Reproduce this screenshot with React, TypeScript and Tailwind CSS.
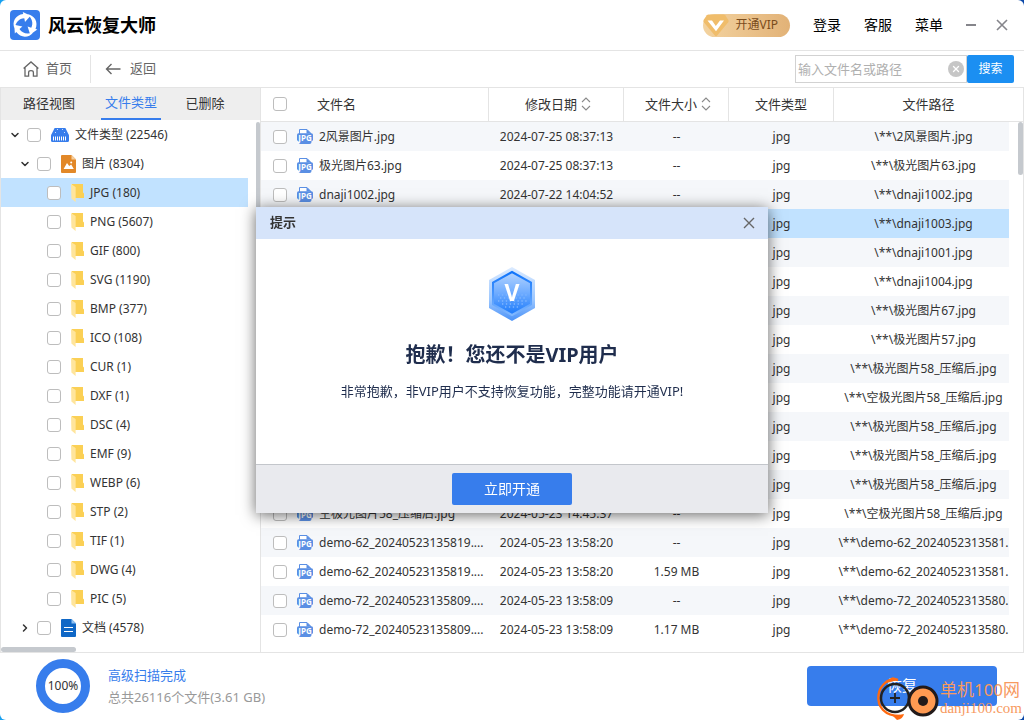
import { ChevronDown, ChevronRight, X } from "lucide-react";
import { useState } from "react";

interface FileRow {
  name: string;
  path: string;
  date: string;
  size: string;
}

interface Folder {
  label: string;
  count: number;
}

const folders: Folder[] = [
  { label: "JPG", count: 180 },
  { label: "PNG", count: 5607 },
  { label: "GIF", count: 800 },
  { label: "SVG", count: 1190 },
  { label: "BMP", count: 377 },
  { label: "ICO", count: 108 },
  { label: "CUR", count: 1 },
  { label: "DXF", count: 1 },
  { label: "DSC", count: 4 },
  { label: "EMF", count: 9 },
  { label: "WEBP", count: 6 },
  { label: "STP", count: 2 },
  { label: "TIF", count: 1 },
  { label: "DWG", count: 4 },
  { label: "PIC", count: 5 },
];

const files: FileRow[] = [
  { name: "2风景图片.jpg", path: "\\**\\2风景图片.jpg", date: "2024-07-25 08:37:13", size: "--" },
  { name: "极光图片63.jpg", path: "\\**\\极光图片63.jpg", date: "2024-07-25 08:37:13", size: "--" },
  { name: "dnaji1002.jpg", path: "\\**\\dnaji1002.jpg", date: "2024-07-22 14:04:52", size: "--" },
  { name: "dnaji1003.jpg", path: "\\**\\dnaji1003.jpg", date: "2024-07-22 14:04:52", size: "--" },
  { name: "dnaji1001.jpg", path: "\\**\\dnaji1001.jpg", date: "2024-07-22 14:04:52", size: "--" },
  { name: "dnaji1004.jpg", path: "\\**\\dnaji1004.jpg", date: "2024-07-22 14:04:52", size: "--" },
  { name: "极光图片67.jpg", path: "\\**\\极光图片67.jpg", date: "2024-05-23 14:45:37", size: "--" },
  { name: "极光图片57.jpg", path: "\\**\\极光图片57.jpg", date: "2024-05-23 14:45:37", size: "--" },
  { name: "极光图片58_压缩后.jpg", path: "\\**\\极光图片58_压缩后.jpg", date: "2024-05-23 14:45:37", size: "--" },
  { name: "空极光图片58_压缩后.jpg", path: "\\**\\空极光图片58_压缩后.jpg", date: "2024-05-23 14:45:37", size: "--" },
  { name: "极光图片58_压缩后.jpg", path: "\\**\\极光图片58_压缩后.jpg", date: "2024-05-23 14:45:37", size: "--" },
  { name: "极光图片58_压缩后.jpg", path: "\\**\\极光图片58_压缩后.jpg", date: "2024-05-23 14:45:37", size: "--" },
  { name: "极光图片58_压缩后.jpg", path: "\\**\\极光图片58_压缩后.jpg", date: "2024-05-23 14:45:37", size: "--" },
  { name: "空极光图片58_压缩后.jpg", path: "\\**\\空极光图片58_压缩后.jpg", date: "2024-05-23 14:45:37", size: "--" },
  { name: "demo-62_20240523135819....", path: "\\**\\demo-62_2024052313581.", date: "2024-05-23 13:58:20", size: "--" },
  { name: "demo-62_20240523135819....", path: "\\**\\demo-62_2024052313581.", date: "2024-05-23 13:58:20", size: "1.59 MB" },
  { name: "demo-72_20240523135809....", path: "\\**\\demo-72_2024052313580.", date: "2024-05-23 13:58:09", size: "--" },
  { name: "demo-72_20240523135809....", path: "\\**\\demo-72_2024052313580.", date: "2024-05-23 13:58:09", size: "1.17 MB" },
];

function CheckBox({ label }: { label: string }) {
  return (
    <input
      type="checkbox"
      aria-label={label}
      className="block size-3.5 shrink-0 appearance-none rounded-[3px] border border-[#bdbdbd] bg-white checked:bg-[#377dec]"
    />
  );
}

function AppLogo() {
  return (
    <svg viewBox="0 0 30 30" className="size-[30px]">
      <rect width="30" height="30" rx="4" fill="#377dec" />
      {/* three arrows chasing each other */}
      {["rotate(0 15 15)", "rotate(120 15 15)", "rotate(240 15 15)"].map((turn) => (
        <path
          key={turn}
          transform={turn}
          fill="#fff"
          d="M4.6 18.6C1.6 11.6 5.6 4.8 13.2 3.9L12.8 2L20.6 5.8L15 12L14.3 8.2C9 8.4 5.4 12.4 4.6 18.6Z"
        />
      ))}
    </svg>
  );
}

function HomeIcon() {
  return (
    <svg viewBox="0 0 16 16" className="size-4" fill="none" stroke="#666" strokeWidth="1.3">
      <path d="M.6 7.6L8 .9L15.4 7.6M2 6.8V15.2H5.6V11.4Q5.6 9.6 8 9.6T10.4 11.4V15.2H14V6.8" />
    </svg>
  );
}

function BackIcon() {
  return (
    <svg viewBox="0 0 16 14" className="h-3.5 w-4" fill="none" stroke="#666" strokeWidth="1.4">
      <path d="M15.5 7H1.5M6.5 2L1.5 7L6.5 12" />
    </svg>
  );
}

function DriveIcon() {
  return (
    <svg viewBox="0 0 18 14" className="h-3.5 w-[18px] shrink-0">
      <path d="M3.6 0H14.4L17.4 6V8H.6V6Z" fill="#377dec" />
      <rect y="6" width="18" height="8" rx="1.5" fill="#377dec" />
      <path
        d="M2.5 8.5V12.5M4.5 8.5V12.5M6.5 8.5V12.5M8.5 8.5V12.5M10.5 8.5V12.5M12.5 8.5V12.5M14.5 8.5V12.5"
        stroke="#fff"
      />
      <path d="M6 1.5H7M11 1.5H12M4 4.5H5M13 4.5H14" stroke="#c8dcfb" />
    </svg>
  );
}

function ImageFileIcon() {
  return (
    <svg viewBox="0 0 15 18" className="h-[18px] w-[15px] shrink-0">
      <path d="M1 0H10.5L15 4.5V17Q15 18 14 18H1Q0 18 0 17V1Q0 0 1 0Z" fill="#e28828" />
      <path d="M10.5 0L15 4.5H10.5Z" fill="#f5cf9f" />
      <path d="M2.6 14L6 8L8.2 11L10.2 9.4L12.8 14Z" fill="#fff" />
      <circle cx="10.2" cy="7.6" r="1" fill="#fff" />
    </svg>
  );
}

function DocFileIcon() {
  return (
    <svg viewBox="0 0 15 18" className="h-[18px] w-[15px] shrink-0">
      <path d="M1 0H10.5L15 4.5V17Q15 18 14 18H1Q0 18 0 17V1Q0 0 1 0Z" fill="#0f67c6" />
      <path d="M10.5 0L15 4.5H10.5Z" fill="#8fc1f2" />
      <path d="M3 8.5H12M3 12.5H12" stroke="#fff" strokeWidth="1.2" />
    </svg>
  );
}

function FolderIcon() {
  return (
    <svg viewBox="0 0 13 18" className="h-[18px] w-[13px] shrink-0">
      <path d="M1 0H12V8.5L13 9.5V14H1Z" fill="#fbd055" />
      <path d="M0 0L4.6 3V18L.4 14.6Z" fill="#ffe59c" />
    </svg>
  );
}

function JpgIcon() {
  return (
    <svg viewBox="0 0 16 15" className="h-[15px] w-4 shrink-0">
      <path d="M2.5 5V.5H10L13.5 4V5" fill="#fff" stroke="#5a8fe4" />
      <path d="M9.5 0L14 4.5H9.5Z" fill="#5a8fe4" />
      <rect y="4.2" width="16" height="7.8" rx="1.5" fill="#5a8fe4" />
      <path d="M1.5 11.5H14.5V13Q14.5 15 12.5 15H3.5Q1.5 15 1.5 13Z" fill="#5a8fe4" />
      <text x="8" y="11.5" textAnchor="middle" fontSize="8" fontWeight="700" fill="#fff">
        JPG
      </text>
    </svg>
  );
}

function SortIcon() {
  return (
    <svg viewBox="0 0 10 14" className="h-3.5 w-2.5" fill="none" stroke="#8a8a8a" strokeWidth="1.1">
      <path d="M1 5L5 1L9 5M1 9L5 13L9 9" />
    </svg>
  );
}

function VipBadge() {
  return (
    <svg viewBox="0 0 26 23" className="h-[23px] w-[26px]">
      <path
        d="M5.5 .5H20.5Q21.5 .5 22.2 1.3L25.4 6Q26 7.2 25.2 8.2L14.2 21.5Q13 22.8 11.8 21.5L.8 8.2Q0 7.2 .6 6L3.8 1.3Q4.5 .5 5.5 .5Z"
        fill="#f0bd6b"
      />
      <path d="M4.5 6.5H9L12.8 12L17 6.5H21L13 17.2Z" fill="#fff" />
    </svg>
  );
}

function VipHexagon() {
  return (
    <svg viewBox="0 0 46 54" className="h-[54px] w-[46px]">
      <defs>
        <linearGradient id="hex-outer" x1="0" y1="0" x2="0" y2="1">
          <stop offset="0" stopColor="#dcebff" />
          <stop offset=".6" stopColor="#9cc7ff" />
          <stop offset="1" stopColor="#4a92f8" />
        </linearGradient>
        <linearGradient id="hex-inner" x1="0" y1="0" x2="0" y2="1">
          <stop offset="0" stopColor="#b4d4ff" />
          <stop offset=".5" stopColor="#6dabff" />
          <stop offset="1" stopColor="#1878fb" />
        </linearGradient>
        <linearGradient id="hex-edge" x1="0" y1="0" x2="0" y2="1">
          <stop offset="0" stopColor="#0f74fb" />
          <stop offset="1" stopColor="#7fb7ff" />
        </linearGradient>
      </defs>
      <path d="M23 0L46 13V41L23 54L0 41V13Z" fill="url(#hex-outer)" />
      <path d="M23 5L42 15.5V37.5L23 48L4 37.5V15.5Z" fill="url(#hex-inner)" stroke="url(#hex-edge)" strokeWidth="2" />
      <g stroke="#b8d7ff" strokeDasharray="1.3 2.6" strokeWidth="1.1">
        <path d="M9 28H38" opacity=".4" />
        <path d="M11 31H37" opacity=".6" />
        <path d="M9 34H38" opacity=".7" />
        <path d="M13 37H35" opacity=".8" />
        <path d="M16 40H31" opacity=".8" />
      </g>
      <text x="23" y="34" textAnchor="middle" fontSize="23" fontWeight="700" fill="#fff">
        V
      </text>
    </svg>
  );
}

function Watermark() {
  return (
    <div className="pointer-events-none absolute right-0.5 bottom-0 flex items-end">
      <svg viewBox="0 0 64 44" className="h-11 w-16" fill="none">
        <path d="M22 4C13 1 4 9 2.5 19C1 31 9 40 24 40" stroke="#ff6a10" strokeWidth="2.4" />
        <path d="M10 7L15 2Q18 0 22 4Z" fill="#ff6a10" />
        <path d="M17 40L28 38Q27 43 21 44Z" fill="#ff6a10" />
        <circle cx="19" cy="22" r="14" stroke="#222" strokeWidth="2.4" />
        <path d="M19 17V27M14 22H24" stroke="#222" strokeWidth="1.8" />
        <circle cx="47" cy="25" r="14" fill="#ff9a52" stroke="#221a1a" strokeWidth="3" />
        <circle cx="47" cy="25" r="5" fill="#221a1a" />
      </svg>
      <div className="pb-1 text-[#f79a5f]">
        <div className="text-[17px] leading-5">单机100网</div>
        <div className="font-['Liberation_Serif',serif] text-[15px] leading-4">danji100.com</div>
      </div>
    </div>
  );
}

function Sidebar() {
  const [selected, setSelected] = useState("JPG");

  return (
    <aside className="relative flex w-[261px] shrink-0 flex-col border-x border-[#e4e4e4]">
      <nav className="flex h-8 shrink-0 bg-[#eeeeee] pl-2 text-[13px]">
        <button className="w-20">路径视图</button>
        <div className="w-3" />
        <button className="w-[60px] border-b-2 border-[#377dec] whitespace-nowrap text-[#377dec]">文件类型</button>
        <div className="w-3.5" />
        <button className="w-[60px]">已删除</button>
      </nav>

      {/* File type tree */}
      <ul className="text-xs">
        <li className="flex h-[29px] items-center pl-2">
          <ChevronDown className="mr-1.5 size-3" strokeWidth={3} />
          <CheckBox label="文件类型" />
          <span className="w-2.5" />
          <DriveIcon />
          <span className="pl-1.5">文件类型 (22546)</span>
        </li>
        <li className="flex h-[29px] items-center pl-[18px]">
          <ChevronDown className="mr-1.5 size-3" strokeWidth={3} />
          <CheckBox label="图片" />
          <span className="w-2.5" />
          <ImageFileIcon />
          <span className="pl-1.5">图片 (8304)</span>
        </li>
        {folders.map((folder) => (
          <li
            key={folder.label}
            onClick={() => setSelected(folder.label)}
            className={`mr-3 flex h-[29px] items-center pl-[46px] ${
              folder.label === selected ? "bg-[#c1e2ff]" : ""
            }`}
          >
            <CheckBox label={folder.label} />
            <span className="w-2.5" />
            <FolderIcon />
            <span className="pl-1.5">
              {folder.label} ({folder.count})
            </span>
          </li>
        ))}
        <li className="flex h-[29px] items-center pl-[18px]">
          <ChevronRight className="mr-1.5 size-3" strokeWidth={3} />
          <CheckBox label="文档" />
          <span className="w-2.5" />
          <DocFileIcon />
          <span className="pl-1.5">文档 (4578)</span>
        </li>
      </ul>

      {/* Scroll bars */}
      <div className="absolute top-[34px] right-0 h-[200px] w-1 rounded-full bg-[#c5c9ce]" />
      <div className="absolute bottom-0 left-0 h-[5px] w-[75px] rounded-full bg-[#c5c9ce]" />
    </aside>
  );
}

function FileTable() {
  return (
    <main className="relative min-w-0 flex-1 overflow-hidden border-r border-[#e4e4e4]">
      <table className="w-full table-fixed border-separate border-spacing-0 text-xs">
        <colgroup>
          <col className="w-[228px]" />
          <col className="w-[135px]" />
          <col className="w-[105px]" />
          <col className="w-[105px]" />
          <col />
          <col className="w-3.5" />
        </colgroup>
        <thead>
          <tr className="h-[34px] text-[13px] *:border-b *:border-[#e4e4e4] *:p-0 *:font-normal">
            <th className="border-r">
              <div className="flex items-center gap-[30px] pl-3">
                <CheckBox label="全选" />
                文件名
              </div>
            </th>
            <th className="border-r">
              <div className="flex items-center justify-center gap-1 pl-1">
                修改日期
                <SortIcon />
              </div>
            </th>
            <th className="border-r">
              <div className="flex items-center justify-center gap-1 pl-1">
                文件大小
                <SortIcon />
              </div>
            </th>
            <th className="border-r">文件类型</th>
            <th colSpan={2}>文件路径</th>
          </tr>
        </thead>
        <tbody>
          {files.map((file, i) => (
            <tr
              key={i}
              className={`h-[29px] text-center *:p-0 *:whitespace-nowrap ${
                i === 3
                  ? "*:not-last:bg-[#c1e2ff]"
                  : i % 2 === 0
                    ? "*:not-last:bg-[#f5f7fa]"
                    : ""
              }`}
            >
              <td>
                <div className="flex items-center pl-3">
                  <CheckBox label={file.name} />
                  <span className="w-2.5" />
                  <JpgIcon />
                  <span className="pl-1.5">{file.name}</span>
                </div>
              </td>
              <td>{file.date}</td>
              <td>{file.size}</td>
              <td>jpg</td>
              <td>
                <div className="overflow-hidden pl-1">{file.path}</div>
              </td>
              <td />
            </tr>
          ))}
        </tbody>
      </table>
      <div className="absolute top-[34px] right-0 h-[53px] w-[5px] rounded-full bg-[#c5c9ce]" />
    </main>
  );
}

function VipDialog({ onClose }: { onClose: () => void }) {
  return (
    <div className="fixed inset-0 flex items-center justify-center">
      <div
        role="dialog"
        aria-label="提示"
        className="w-lg bg-white text-[#1f2d4d] shadow-[0_2px_14px_rgba(0,0,0,0.6)]"
      >
        <div className="flex h-8 items-center justify-between bg-[#d6e4fa] pr-3 pl-3.5">
          <span className="text-[13px] font-bold text-[#333]">提示</span>
          <button onClick={onClose} aria-label="关闭提示">
            <svg viewBox="0 0 14 14" className="size-3.5" stroke="#666" strokeWidth="1.4">
              <path d="M2 2L12 12M12 2L2 12" />
            </svg>
          </button>
        </div>
        <div className="flex h-[225px] flex-col items-center pt-7">
          <VipHexagon />
          <h2 className="mt-5 text-xl leading-7 font-bold">抱歉！您还不是VIP用户</h2>
          <p className="mt-3 text-[13px] leading-5">非常抱歉，非VIP用户不支持恢复功能，完整功能请开通VIP!</p>
        </div>
        <div className="flex h-[49px] items-center justify-center border-t border-[#c3c6cb] bg-[#e9eaee]">
          <button onClick={onClose} className="h-8 w-[120px] rounded-xs bg-[#377dec] text-sm text-white">
            立即开通
          </button>
        </div>
      </div>
    </div>
  );
}

export default function App() {
  const [showDialog, setShowDialog] = useState(true);

  return (
    <div className="h-screen bg-linear-to-r from-[#18a0f0] to-[#0b48a8] font-['Noto_Sans','Noto_Sans_CJK_SC',sans-serif] text-[#333]">
      <div className="relative flex h-full flex-col overflow-hidden rounded-md bg-white">
        {/* Title bar */}
        <header className="flex h-[51px] shrink-0 items-center border-b border-[#e4e4e4] pr-4 pl-2.5 text-black">
          <AppLogo />
          <h1 className="pl-2 text-lg font-bold">风云恢复大师</h1>
          <div className="ml-auto flex items-center gap-[23px] text-sm">
            <button className="flex h-[23px] items-center gap-1.5 rounded-full bg-linear-to-r from-[#f3d3a0] to-[#e2b277] pr-3 text-xs text-[#7a4c1c]">
              <VipBadge />
              开通VIP
            </button>
            <button>登录</button>
            <button>客服</button>
            <button>菜单</button>
            <div className="flex items-center gap-5">
              <button aria-label="最小化" className="w-2.5">
                <div className="h-0.5 bg-[#85858b]" />
              </button>
              <button aria-label="关闭">
                <svg viewBox="0 0 12 12" className="size-3" stroke="#85858b" strokeWidth="1.6">
                  <path d="M1 1L11 11M11 1L1 11" />
                </svg>
              </button>
            </div>
          </div>
        </header>

        {/* Toolbar */}
        <div className="flex h-[37px] shrink-0 items-center border-b border-[#e4e4e4] pr-2.5 pl-[23px] text-[13px] text-[#666]">
          <button className="flex items-center gap-[7px]">
            <HomeIcon />
            首页
          </button>
          <div className="mr-3.5 ml-[18px] h-7 w-px bg-[#e4e4e4]" />
          <button className="flex items-center gap-[9px]">
            <BackIcon />
            返回
          </button>
          <form className="ml-auto flex h-7" onSubmit={(e) => e.preventDefault()}>
            <div className="relative">
              <input
                type="text"
                aria-label="搜索文件"
                placeholder="输入文件名或路径"
                className="h-7 w-[172px] border border-[#d2d2d2] pr-7 pl-0.5 placeholder:text-[#b0b0b0]"
              />
              <button
                type="reset"
                aria-label="清空"
                className="absolute top-1.5 right-[3px] flex size-4 items-center justify-center rounded-full bg-[#c6c6c6] text-white"
              >
                <X className="size-2.5" strokeWidth={3} />
              </button>
            </div>
            <button type="submit" className="w-[47px] rounded-xs bg-[#1b8ff2] text-xs text-white">
              搜索
            </button>
          </form>
        </div>

        <div className="flex min-h-0 flex-1">
          <Sidebar />
          <FileTable />
        </div>

        {/* Scan status */}
        <footer className="flex h-[68px] shrink-0 items-center justify-between border-t border-[#e4e4e4] pr-[27px] pb-0.5 pl-9">
          <div className="flex items-center gap-[18px]">
            <div className="flex size-[54px] items-center justify-center rounded-full border-9 border-[#377dec] text-xs">
              100%
            </div>
            <div className="text-[13px] leading-[22px]">
              <div className="text-[#377dec]">高级扫描完成</div>
              <div className="text-[#999]">总共26116个文件(3.61 GB)</div>
            </div>
          </div>
          <button className="h-10 w-[190px] rounded bg-[#377dec] text-[15px] text-white">恢复</button>
        </footer>

        <Watermark />
      </div>

      {showDialog && <VipDialog onClose={() => setShowDialog(false)} />}
    </div>
  );
}
